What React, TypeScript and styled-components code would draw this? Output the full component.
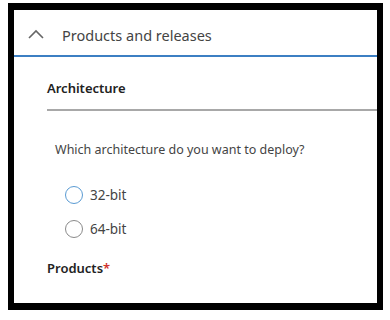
import React from 'react';
import styled, { createGlobalStyle } from 'styled-components';

const GlobalStyle = createGlobalStyle`
  body {
    margin: 0;
    background: #ffffff;
    font-family: "Noto Sans", "Open Sans", sans-serif;
  }
`;

const App = () => {
  return (
    <>
      <GlobalStyle />
      <Frame>
        <Header>
          <Chevron width="18" height="12" viewBox="0 0 18 12">
            <path d="M2 10 L9 3 L16 10" fill="none" stroke="#666" strokeWidth="1.6" />
          </Chevron>
          <HeaderTitle>Products and releases</HeaderTitle>
        </Header>
        <Body>
          <SectionTitle>Architecture</SectionTitle>
          <Divider />
          <Question>Which architecture do you want to deploy?</Question>
          <RadioList>
            <RadioRow>
              <RadioCircle $focused />
              <RadioLabel>32-bit</RadioLabel>
            </RadioRow>
            <RadioRow>
              <RadioCircle />
              <RadioLabel>64-bit</RadioLabel>
            </RadioRow>
          </RadioList>
          <SectionTitle>
            Products<Required>*</Required>
          </SectionTitle>
        </Body>
      </Frame>
    </>
  );
};

export default App;

const Frame = styled.div`
  margin: 3px 0 0 8px;
  width: 375px;
  height: 307px;
  box-sizing: border-box;
  border: 6px solid #000;
  border-top-width: 7px;
  border-bottom-width: 7px;
  background: #fff;
  overflow: hidden;
`;

const Header = styled.div`
  display: flex;
  align-items: center;
  box-sizing: border-box;
  height: 47px;
  padding: 5px 0 0 13px;
  border-bottom: 2px solid #3c7fc3;
`;

const Chevron = styled.svg`
  display: block;
  margin-right: 17px;
  margin-top: -2px;
`;

const HeaderTitle = styled.span`
  font-size: 14.5px;
  color: #444;
`;

const Body = styled.div`
  padding: 22px 0 0 33px;
`;

const SectionTitle = styled.div`
  font-size: 13px;
  font-weight: 600;
  color: #222;
  line-height: 18px;
`;

const Required = styled.span`
  color: #d0312d;
`;

const Divider = styled.div`
  height: 2px;
  background: #a8a8a8;
  margin: 12px 0 0 0;
`;

const Question = styled.div`
  font-size: 12.5px;
  color: #444;
  margin: 30px 0 0 8px;
  line-height: 18px;
`;

const RadioList = styled.div`
  display: flex;
  flex-direction: column;
  gap: 16px;
  margin: 27px 0 21px 18px;
`;

const RadioRow = styled.div`
  display: flex;
  align-items: center;
  gap: 7px;
`;

const RadioCircle = styled.span<{ $focused?: boolean }>`
  width: 18px;
  height: 18px;
  border-radius: 50%;
  border: 1.5px solid ${(p) => (p.$focused ? '#5a9bd3' : '#8a8a8a')};
  box-sizing: border-box;
`;

const RadioLabel = styled.span`
  font-size: 13.5px;
  color: #444;
  line-height: 18px;
`;
